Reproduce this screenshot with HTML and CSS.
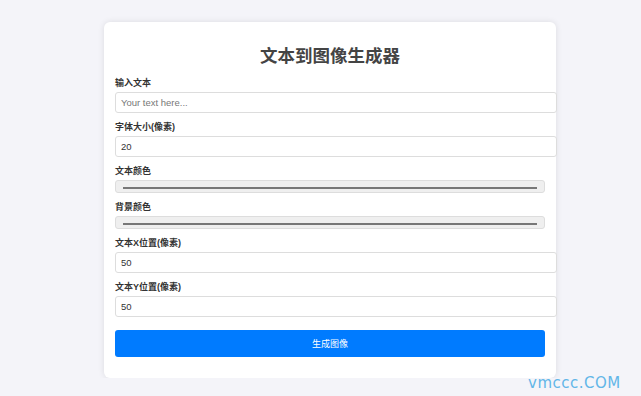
FILE: index.html
```html
<!DOCTYPE html>
<html lang="zh">
<head>
    <meta charset="UTF-8">
    <title>文本到图像生成器</title>
    <link rel="stylesheet" href="styles.css">
</head>
<body>
    <div class="container">
        <h1>文本到图像生成器</h1>
        <div class="form-group">
            <label for="text">输入文本</label>
            <input type="text" id="text" placeholder="Your text here...">
        </div>
        <div class="form-group">
            <label for="fontSize">字体大小(像素)</label>
            <input type="number" id="fontSize" value="20">
        </div>
        <div class="form-group">
            <label for="textColor">文本颜色</label>
            <input type="color" id="textColor" value="#000000">
        </div>
        <div class="form-group">
            <label for="bgColor">背景颜色</label>
            <input type="color" id="bgColor" value="#ffffff">
        </div>
        <div class="form-group">
            <label for="posX">文本X位置(像素)</label>
            <input type="number" id="posX" value="50">
        </div>
        <div class="form-group">
            <label for="posY">文本Y位置(像素)</label>
            <input type="number" id="posY" value="50">
        </div>
        <button class="button">生成图像</button>
    </div>
    <div class="watermark">vmccc.COM</div>
</body>
</html>
```

FILE: styles.css
```css
body { margin: 0; background-color: #f4f4f9; font-family: "Liberation Sans", Arial, "Noto Sans CJK SC", sans-serif; color: #333; }
.container { width: 430px; margin: 22px 0 0 104px; padding: 11px; background: #fff; border-radius: 6px; box-shadow: 0 0 6px rgba(0, 0, 0, 0.1); }
h1 { margin: 12px 0 10px; font-size: 17.5px; line-height: 23px; text-align: center; color: #444; }
.form-group { margin-bottom: 9px; }
.form-group label { display: block; font-size: 9px; line-height: 11px; font-weight: bold; margin-bottom: 3px; color: #333; }
.form-group input { display: block; width: 100%; padding: 5px; font-size: 9.5px; line-height: 9px; height: 9px; border: 1px solid #ddd; border-radius: 3px; color: #333; font-family: inherit; margin: 0; }
.form-group input::placeholder { color: #777; }
.form-group input[type=number]::-webkit-inner-spin-button { -webkit-appearance: none; }
.form-group input[type=color] { box-sizing: border-box; height: 13px; background: #efefef; padding: 5px; }
.button { display: block; width: 100%; height: 27px; margin: 13px 0 10px; border: none; border-radius: 3px; background-color: #007bff; color: #fff; font-size: 9px; font-family: inherit; cursor: pointer; }
.watermark { position: absolute; left: 528px; top: 374px; font-size: 15px; letter-spacing: 0.5px; color: #62b6e8; font-family: "DejaVu Sans", sans-serif; }
```
